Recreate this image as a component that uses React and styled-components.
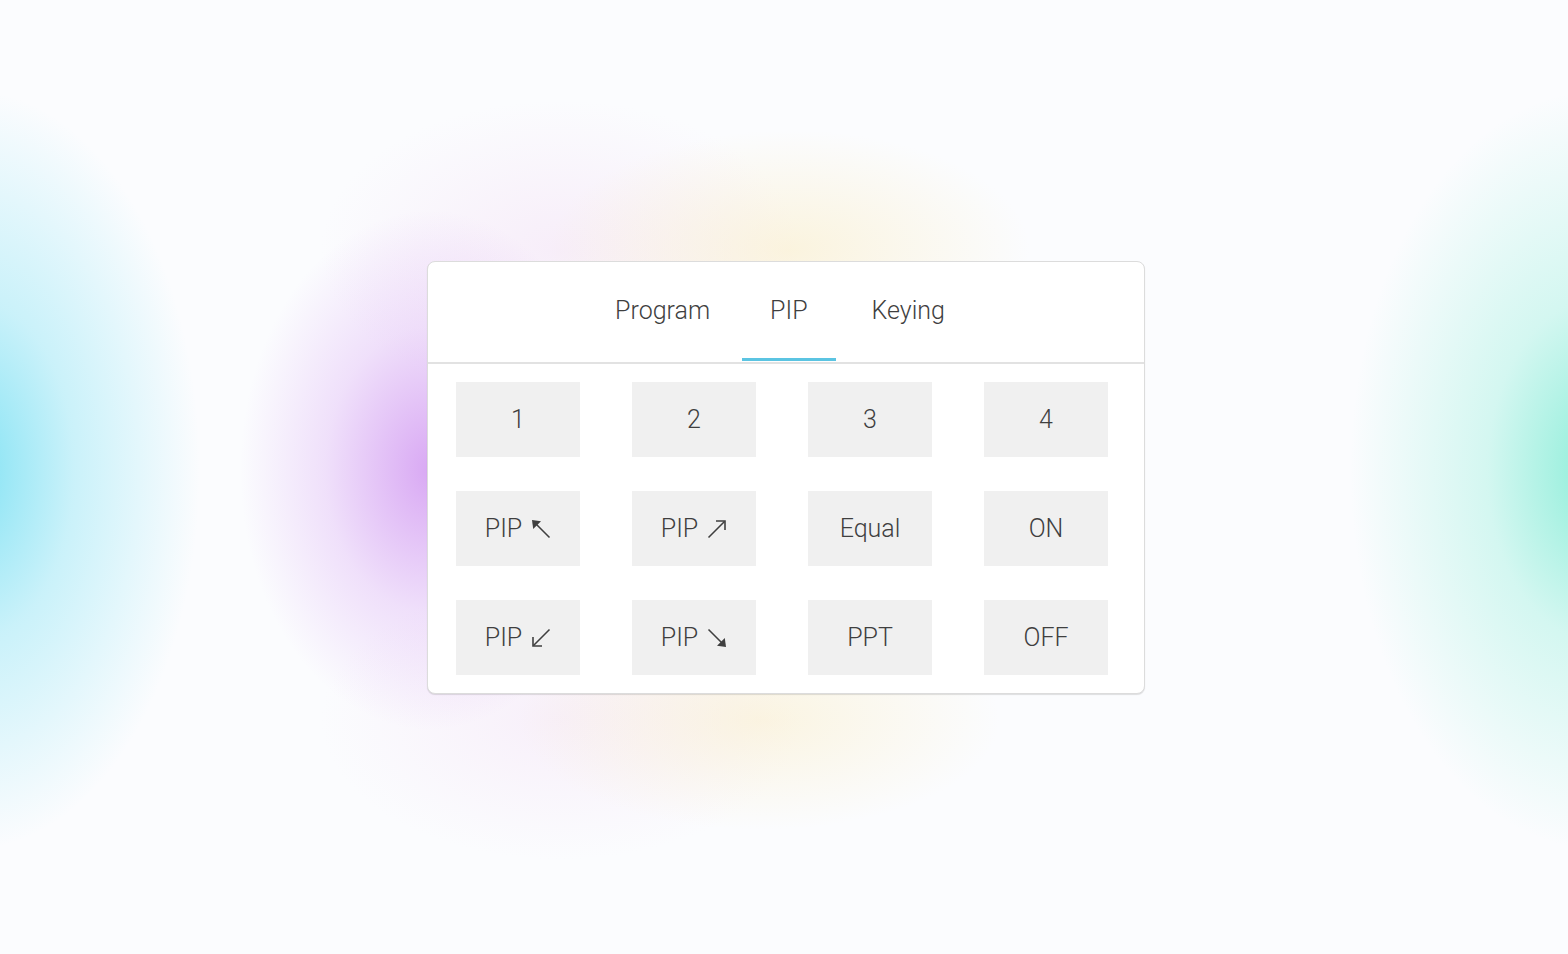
import React, { useState } from "react";
import styled, { createGlobalStyle } from "styled-components";

const Global = createGlobalStyle`
  html, body {
    margin: 0;
    padding: 0;
    height: 100%;
  }
  body {
    font-family: Roboto, "Liberation Sans", sans-serif;
    background-color: #fbfcfe;
    background-image:
      radial-gradient(ellipse 230px 380px at -30px 470px, rgba(110, 222, 242, 0.85), rgba(110, 222, 242, 0.35) 45%, rgba(110, 222, 242, 0) 100%),
      radial-gradient(ellipse 250px 380px at 1600px 470px, rgba(120, 235, 210, 0.85), rgba(120, 235, 210, 0.3) 45%, rgba(120, 235, 210, 0) 100%),
      radial-gradient(ellipse 190px 260px at 430px 470px, rgba(205, 140, 240, 0.75), rgba(205, 140, 240, 0.25) 55%, rgba(205, 140, 240, 0) 100%),
      radial-gradient(ellipse 240px 120px at 790px 250px, rgba(250, 235, 190, 0.5), rgba(250, 235, 190, 0) 100%),
      radial-gradient(ellipse 240px 110px at 760px 720px, rgba(250, 235, 190, 0.45), rgba(250, 235, 190, 0) 100%),
      radial-gradient(ellipse 240px 150px at 560px 250px, rgba(240, 210, 240, 0.35), rgba(240, 210, 240, 0) 100%),
      radial-gradient(ellipse 240px 140px at 560px 720px, rgba(240, 210, 240, 0.3), rgba(240, 210, 240, 0) 100%);
  }
  #root {
    height: 100%;
  }
`;

const Page = styled.main`
  height: 954px;
  display: flex;
  align-items: flex-start;
  justify-content: center;
  padding-top: 261px;
  padding-left: 4px;
  box-sizing: border-box;
`;

const Card = styled.section`
  width: 718px;
  background: #fff;
  border: 1px solid #dcdcdc;
  border-radius: 8px;
  box-shadow: 0 1px 1px rgba(0, 0, 0, 0.12);
  box-sizing: border-box;
  overflow: hidden;
`;

const TabBar = styled.nav`
  height: 102px;
  display: flex;
  justify-content: center;
  align-items: stretch;
  border-bottom: 2px solid #e2e2e2;
  box-sizing: border-box;
  padding-right: 12px;
`;

const Tab = styled.button`
  position: relative;
  background: none;
  border: none;
  padding: 0 28px 4px;
  font-family: inherit;
  font-weight: 300;
  font-size: 25px;
  color: #3f3f3f;
  cursor: pointer;

  & + & {
    margin-left: 4px;
  }
  & + & + & {
    margin-left: 8px;
  }

  &::after {
    content: "";
    position: absolute;
    left: 0;
    right: 0;
    bottom: 1px;
    height: 3px;
    background: ${(p) => (p.$active ? "#5bc4e2" : "transparent")};
  }
`;

const Grid = styled.div`
  display: grid;
  grid-template-columns: repeat(4, 124px);
  grid-auto-rows: 75px;
  column-gap: 52px;
  row-gap: 34px;
  padding: 18px 0 18px 28px;
`;

const Key = styled.button`
  display: flex;
  align-items: center;
  justify-content: center;
  gap: 9px;
  background: #f0f0f0;
  border: none;
  border-radius: 0;
  font-family: inherit;
  font-weight: 300;
  font-size: 25px;
  color: #3f3f3f;
  cursor: pointer;
  padding: 0;
`;

const Arrow = ({ dir }) => {
  // base arrow points up-left; rotate for other corners
  const rot = { nw: 0, ne: 90, se: 180, sw: 270 }[dir];
  const filled = dir === "nw" || dir === "se";
  return (
    <svg width="20" height="20" viewBox="0 0 20 20" style={{ transform: `rotate(${rot}deg)` }}>
      <line x1="2.5" y1="2.5" x2="18.5" y2="18.5" stroke="#3f3f3f" strokeWidth="1.6" />
      {filled ? (
        <polygon points="1,1 10,2.2 2.2,10" fill="#3f3f3f" />
      ) : (
        <polyline points="2,11 2,2 11,2" fill="none" stroke="#3f3f3f" strokeWidth="1.6" />
      )}
    </svg>
  );
};

const keys = [
  { label: "1" },
  { label: "2" },
  { label: "3" },
  { label: "4" },
  { label: "PIP", dir: "nw" },
  { label: "PIP", dir: "ne" },
  { label: "Equal" },
  { label: "ON" },
  { label: "PIP", dir: "sw" },
  { label: "PIP", dir: "se" },
  { label: "PPT" },
  { label: "OFF" },
];

export default function App() {
  const [tab, setTab] = useState("PIP");
  return (
    <>
      <Global />
      <Page>
        <Card>
          <TabBar>
            {["Program", "PIP", "Keying"].map((t) => (
              <Tab key={t} $active={tab === t} onClick={() => setTab(t)}>
                {t}
              </Tab>
            ))}
          </TabBar>
          <Grid>
            {keys.map((k, i) => (
              <Key key={i}>
                {k.label}
                {k.dir && <Arrow dir={k.dir} />}
              </Key>
            ))}
          </Grid>
        </Card>
      </Page>
    </>
  );
}
